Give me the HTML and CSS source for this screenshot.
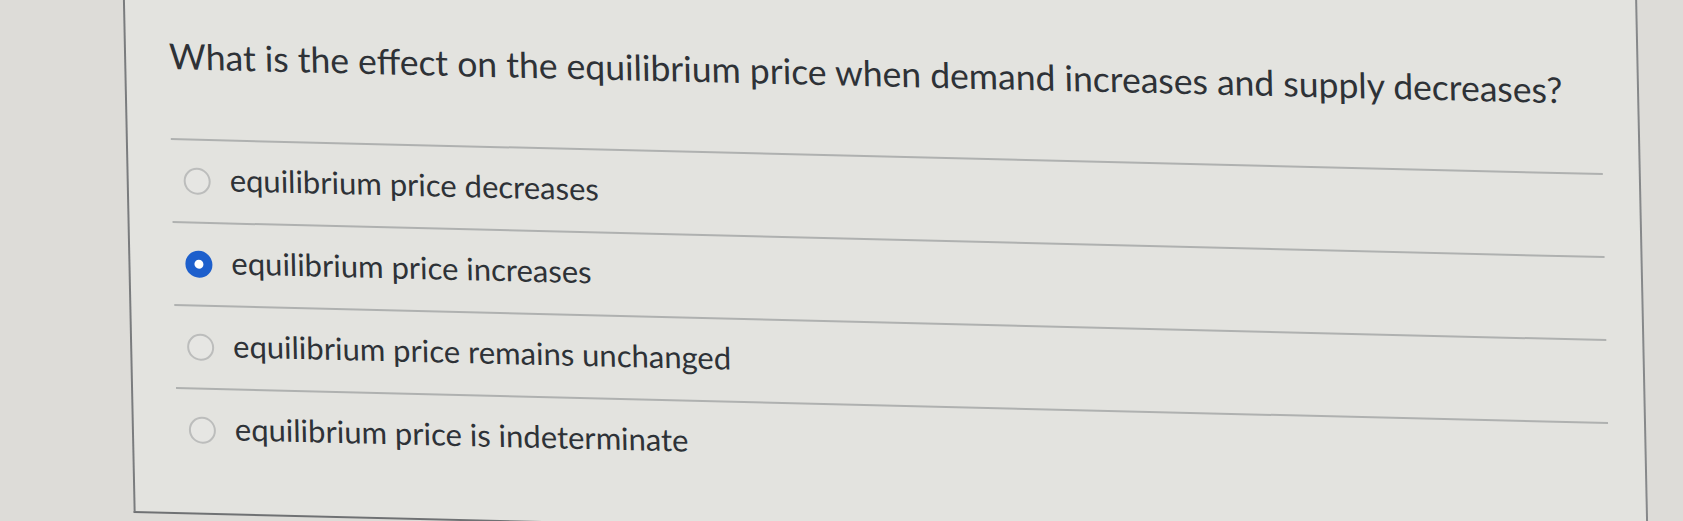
FILE: index.html
```html
<!DOCTYPE html>
<html lang="en">
<head>
<meta charset="utf-8">
<title>Quiz question</title>
<link rel="stylesheet" href="styles.css">
</head>
<body>
  <div class="stage">
    <div class="card">
      <div class="question">What is the effect on the equilibrium price when demand increases and supply decreases?</div>
      <div class="answers">
        <label class="answer">
          <span class="radio"></span>
          <span class="answer-text">equilibrium price decreases</span>
        </label>
        <label class="answer">
          <span class="radio radio-checked"></span>
          <span class="answer-text">equilibrium price increases</span>
        </label>
        <label class="answer">
          <span class="radio"></span>
          <span class="answer-text">equilibrium price remains unchanged</span>
        </label>
        <label class="answer">
          <span class="radio"></span>
          <span class="answer-text">equilibrium price is indeterminate</span>
        </label>
      </div>
    </div>
  </div>
</body>
</html>
```

FILE: styles.css
```css
html, body {
  margin: 0;
  padding: 0;
}

body {
  background: #dddcd8;
  font-family: Lato, "Open Sans", sans-serif;
  color: #2e3237;
  overflow: hidden;
  height: 521px;
}

.stage {
  padding-left: 122px;
  transform: skew(1.2deg, 1.4deg);
  transform-origin: 122px 0;
}

.card {
  box-sizing: border-box;
  width: 1515px;
  margin-top: -44px;
  background: #e3e3df;
  border-left: 2px solid #7a7c7e;
  border-right: 2px solid #86888a;
  border-bottom: 2px solid #6f7173;
  padding: 77px 0 42px 43px;
}

.question {
  font-size: 35.5px;
  line-height: 44px;
  margin-bottom: 60px;
  white-space: nowrap;
}

.answers {
  width: 1432px;
}

.answer {
  box-sizing: border-box;
  height: 83px;
  border-top: 2px solid #afb1b0;
  display: flex;
  align-items: center;
  padding-left: 12px;
}

.radio {
  box-sizing: border-box;
  width: 27px;
  height: 27px;
  border-radius: 50%;
  border: 2px solid #bcbdbc;
  background: #e6e6e3;
  flex: none;
  margin-right: 19px;
}

.radio-checked {
  border: 9px solid #1d5fcc;
  background: #ffffff;
}

.answer-text {
  font-size: 31px;
  line-height: 36px;
  margin-bottom: 6px;
}
```
